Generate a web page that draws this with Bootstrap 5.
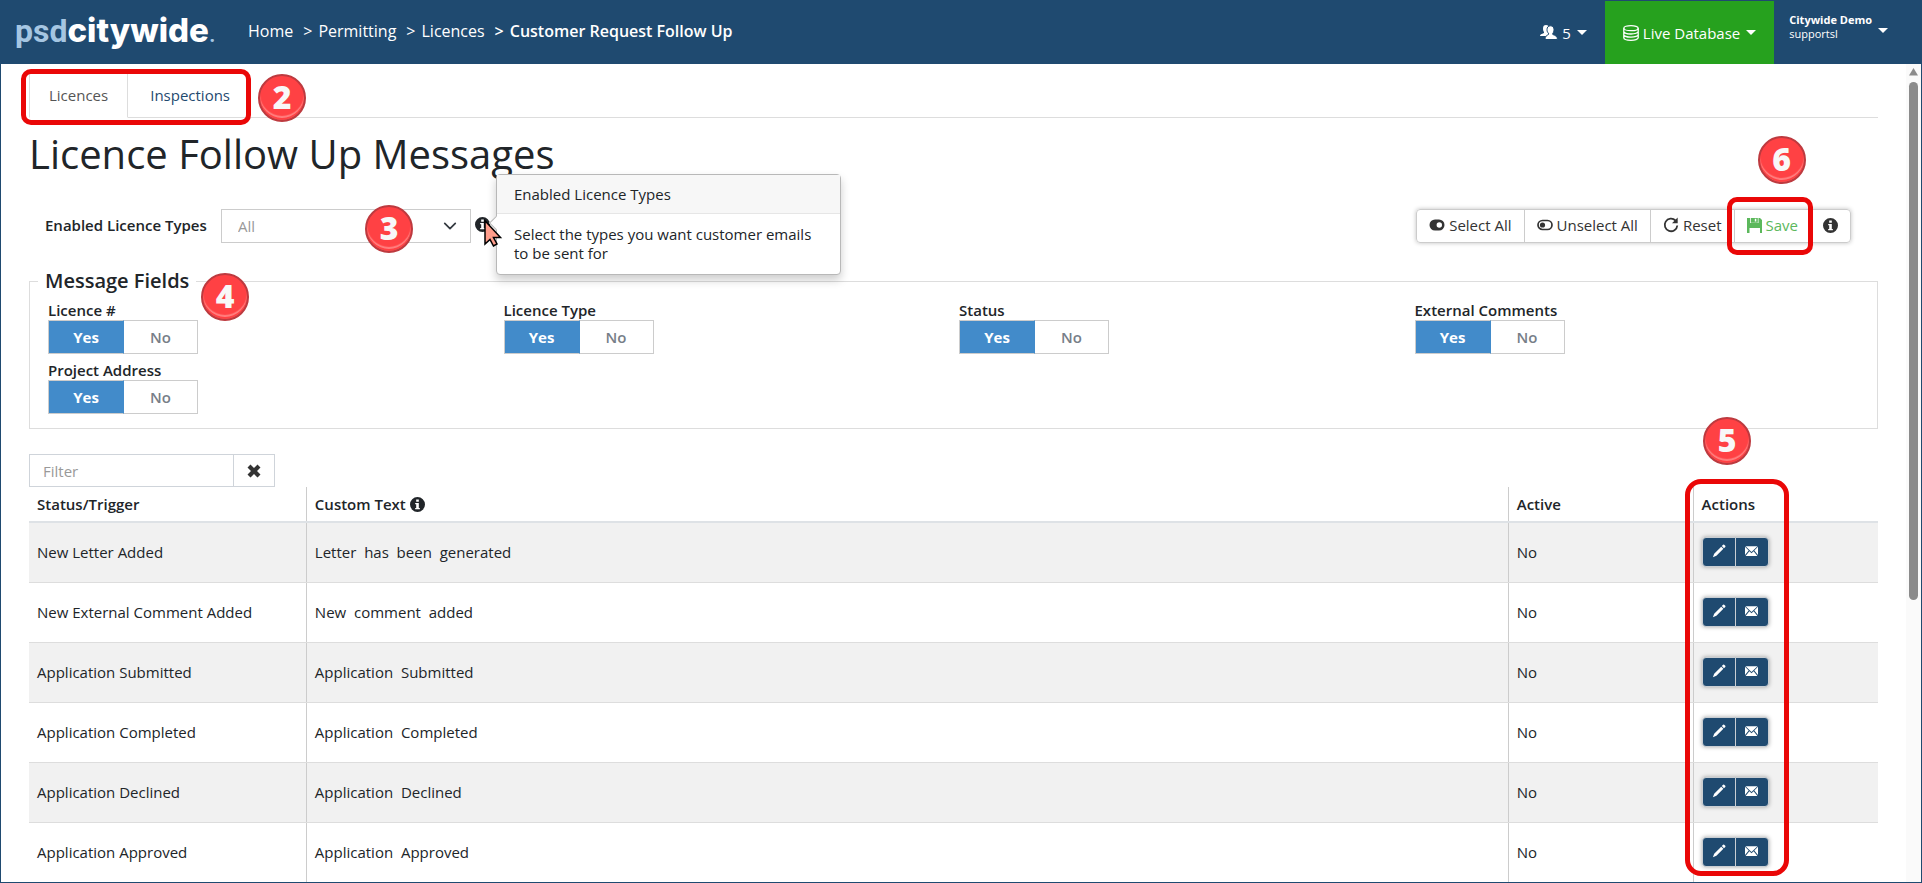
<!DOCTYPE html>
<html lang="en">
<head>
<meta charset="utf-8">
<meta name="viewport" content="width=device-width, initial-scale=1">
<title>Licence Follow Up Messages</title>
<link href="https://cdn.jsdelivr.net/npm/bootstrap@5.3.0/dist/css/bootstrap.min.css" rel="stylesheet">
<style>
  :root { --navy: #1f4a70; --line: #ddd; --edge: #ccc; --marker: #ea0707; }
  body { font-family: "Open Sans", sans-serif; font-size: 15px; line-height: 19px; color: #212529; border: 1px solid var(--navy); }
  svg { display: block; fill: currentColor; }
  svg.line-art { fill: none; stroke: currentColor; }

  .topbar { background: var(--navy); min-height: 63px; color: #fff; font-size: 16px; line-height: 22px; }
  .topbar a, .topbar button { color: #fff; text-decoration: none; }
  .brand { width: 200px; line-height: 40px; margin-left: 14px; margin-right: 33px; padding-bottom: 2px; }
  .brand-psd { font: 700 32px/40px Roboto, sans-serif; color: #a5c6e2; }
  .brand-city { font: 800 33px/40px Inter, sans-serif; }
  .brand-dot { font: 500 24px/40px Roboto, sans-serif; color: #a5c6e2; }
  .crumbs { --bs-breadcrumb-divider: ">"; --bs-breadcrumb-divider-color: #fff; --bs-breadcrumb-item-active-color: #fff; --bs-breadcrumb-item-padding-x: 6px; padding-bottom: 3px; }
  .crumbs .breadcrumb-item + .breadcrumb-item { padding-left: 10px; }
  .crumbs .breadcrumb-item.active { font-weight: 600; }
  .topbar .menu-btn { background: none; border: 0; padding: 0 18px; gap: 4px; font-size: 15px; }
  .topbar .live-db { background: #26a11e; }
  .topbar .account { font-size: 11px; line-height: 14px; text-align: left; padding: 0 33px 12px 15px; }
  .topbar .account .tri { margin-top: 8px; }
  .tri { width: 0; border: 5px solid transparent; border-top-color: #fff; border-bottom: 0; margin-left: 2px; }

  .content { padding: 8px 28px 0; overflow: hidden; }
  .scroll-track { width: 15px; background: #fafafa; padding: 4px 3px; color: #8b8b8b; }
  .scroll-thumb { width: 9px; height: 64%; border-radius: 5px; background: #8b8b8b; margin-top: 6px; }

  .page-tabs { --bs-nav-tabs-border-color: #ddd; --bs-nav-tabs-border-radius: 0; }
  .page-tabs .nav-link { padding: 12px 19px; line-height: 20px; color: var(--navy); }
  .page-tabs .nav-item + .nav-item { margin-left: 2px; }
  .page-tabs .nav-link.active { color: #555; border-color: #ddd #ddd #fff; }
  .page-title { font-size: 40px; line-height: 48px; font-weight: 400; margin: 12px 0 31px 0; }

  .types-label { font-weight: 600; width: 176px; padding-bottom: 2px; }
  .types-select { width: 250px; height: 34px; padding: 6px 16px; border-radius: 0; border: 1px solid var(--edge); font-size: 15px; line-height: 20px; color: #999; background-size: 18px 14px; background-position: right 11px center; }
  .help-pop { left: 275px; bottom: -32px; width: 345px; font-size: 15px; border: 1px solid #b8b8b8; border-radius: 4px; box-shadow: 0 5px 10px rgba(0,0,0,.2); background: #fff; z-index: 3; }
  .help-pop::before { content: ""; position: absolute; left: -6px; top: 43px; width: 10px; height: 10px; background: #fff; border: solid #b8b8b8; border-width: 0 0 1px 1px; transform: rotate(45deg); }
  .help-pop .popover-header { font-size: 15px; line-height: 19px; font-weight: 400; padding: 10px 17px 9px; background: #f7f7f7; border-bottom: 1px solid #e6e6e6; }
  .help-pop .popover-body { font-size: 15px; line-height: 19px; padding: 11px 17px; color: #212529; }
  .pointer { left: 262px; top: 10px; z-index: 4; }

  .tools { box-shadow: 0 0 4px rgba(0,0,0,.25); border-radius: 4px; margin-right: 27px; }
  .tools .btn { --bs-btn-border-color: #ccc; --bs-btn-bg: #fff; --bs-btn-color: #333; font-size: 15px; line-height: 20px; padding: 5px 12px 7px; border-radius: 4px; display: flex; align-items: center; gap: 4px; }
  .tools .btn-save { --bs-btn-color: #5cb85c; }

  .fields { border: 1px solid var(--line); margin-top: 26px; padding: 8px 13px 14px 12px; }
  .fields legend { float: none; width: auto; font-size: 20px; line-height: 24px; font-weight: 600; margin: 0 0 0 -4px; padding: 0 7px; }
  .fields .row { --bs-gutter-x: 12px; --bs-gutter-y: 7px; margin-left: 0; margin-right: 0; }
  .field-name { font-weight: 600; line-height: 19px; }
  .switcher .btn { height: 34px; padding: 6px 0 5px; font-size: 15px; line-height: 21px; font-weight: 600; border-radius: 0; border-color: var(--edge); color: #777e88; background: #fff; }
  .switcher .btn-on { width: 76px; }
  .switcher .btn-off { width: 75px; }
  .switcher .btn-check:checked + .btn { background: #428bca; color: #fff; font-weight: 700; border-color: #ccc; border-right-color: #428bca; }

  .filter { width: 246px; margin-top: 25px; }
  .filter .form-control, .filter .btn { height: 33px; border-radius: 0; border: 1px solid #cfd4da; font-size: 15px; line-height: 20px; }
  .filter .form-control { padding: 6px 13px 5px; }
  .filter .form-control::placeholder { color: #999; }
  .filter .btn { padding: 0 13px; color: #333; }

  .triggers { table-layout: fixed; margin: 0; --bs-table-striped-bg: #f1f1f1; --bs-table-color: #212529; }
  .triggers > :not(caption) > * > * { padding: 0 8px; border-bottom: 1px solid var(--line); vertical-align: middle; }
  .triggers thead th { height: 35px; font-weight: 600; border-bottom: 2px solid #dee2e6; }
  .triggers tbody td { height: 60px; }
  .triggers th + th, .triggers td + td { border-left: 1px solid var(--edge); }
  .col-status { width: 15%; } .col-narrow { width: 10%; }
  .row-tools { box-shadow: 0 0 4px rgba(0,0,0,.35); border-radius: 4px; }
  .row-tools .btn { height: 30px; width: 34px; padding: 0 0 3px; background: var(--navy); border-color: #c9ced3; color: #fff; border-radius: 4px; display: flex; align-items: center; justify-content: center; }

  /* numbered callouts over the page */
  .callout { position: absolute; width: 48px; height: 48px; border-radius: 50%; background: #ff4144; border: 2px solid #bd3a3f; box-shadow: inset 0 -2px 0 #ff4144, inset 0 -4px 1px #ff8080; color: #f8f8f8; font: 800 32px/42px "Open Sans", sans-serif; text-align: center; z-index: 6; }
  .frame { position: absolute; border: 5px solid var(--marker); border-radius: 10px; pointer-events: none; z-index: 5; }
  .frame-tabs { left: -8px; right: -1px; top: -3px; bottom: -8px; }
  .frame-save { left: -7px; right: -2px; top: -12px; bottom: -12px; }
  .frame-actions { right: 89px; top: -8px; bottom: 7px; width: 104px; border-radius: 16px; }
  .callout-2 { left: 100%; top: 2px; margin-left: 8px; }
  .callout-3 { left: 144px; top: -4px; }
  .callout-4 { left: 171px; top: -20px; }
  .callout-5 { right: 127px; top: -70px; }
  .callout-6 { left: 24px; top: -73px; }
</style>
</head>
<body class="vh-100 overflow-hidden d-flex flex-column">
<svg class="d-none" xmlns="http://www.w3.org/2000/svg">
  <symbol id="i-info" viewBox="0 0 16 16"><path fill-rule="evenodd" d="M8 0a8 8 0 1 1 0 16A8 8 0 0 1 8 0zM6.600 2.600v2.400h2.800V2.600zM5.500 6.300v1.400h1.100v4H5.500V13h5v-1.300H9.400V6.300z"/></symbol>
  <symbol id="i-pencil" viewBox="0 0 16 16"><path d="M12.700.8a1 1 0 0 1 1.200 0l1.300 1.300a1 1 0 0 1 0 1.200l-1.500 1.500-2.500-2.500zM10.500 3l2.500 2.500-8 8L1 15l1.500-4z"/></symbol>
  <symbol id="i-mail" viewBox="0 0 16 12"><path d="M.6 0h14.800L8 7.200zM0 .9 4.600 5.500 0 10.800zM16 .9v9.900l-4.600-5.300zM.7 12l4.700-5.700L8 8.800l2.600-2.500L15.300 12z"/></symbol>
</svg>

<header class="topbar d-flex align-items-stretch flex-shrink-0">
  <a href="#" class="brand d-flex align-items-baseline align-self-center" aria-label="psdcitywide"><span class="brand-psd">psd</span><span class="brand-city">citywide</span><span class="brand-dot">.</span></a>
  <nav aria-label="breadcrumb" class="align-self-center">
    <ol class="breadcrumb crumbs mb-0">
      <li class="breadcrumb-item"><a href="#">Home</a></li>
      <li class="breadcrumb-item"><a href="#">Permitting</a></li>
      <li class="breadcrumb-item"><a href="#">Licences</a></li>
      <li class="breadcrumb-item active" aria-current="page">Customer Request Follow Up</li>
    </ol>
  </nav>
  <div class="d-flex ms-auto">
    <button type="button" class="menu-btn d-flex align-items-center">
      <svg width="18" height="15" viewBox="0 0 18 15"><path d="M6 0c2 0 3 1 3 3.500C9 5.500 8.600 6.500 8 7v1.500L10 10v1H0c0-1.500 1.500-2 4-3V7c-.7-.7-1-2-1-3.500C3 1 4 0 6 0z"/><path stroke="#1f4a70" d="M10.500.8c2.300 0 3.500 1.400 3.500 3.900 0 1.900-.6 3-1.200 3.500v1.300c2.500 1 4.500 1.400 4.700 5H5c.2-3.400 1.600-4 3.500-5V8.200C7.700 7.500 7 6.500 7 4.700 7 2.200 8.200.8 10.500.8z"/></svg>
      5 <span class="tri"></span>
    </button>
    <button type="button" class="menu-btn live-db d-flex align-items-center">
      <svg class="line-art" width="16" height="16" viewBox="0 0 16 16" stroke-width="1.300"><ellipse cx="8" cy="3.200" rx="7.200" ry="2.500"/><path d="M.8 3.200v9.600c0 1.400 3.200 2.500 7.200 2.500s7.200-1.100 7.200-2.500V3.200M.8 6.500C.8 7.800 4 9 8 9s7.200-1.200 7.200-2.500M.8 9.700c0 1.300 3.200 2.500 7.200 2.500s7.200-1.200 7.200-2.500"/></svg>
      Live Database <span class="tri"></span>
    </button>
    <button type="button" class="menu-btn account d-flex align-items-center">
      <span><span class="d-block fw-bold">Citywide Demo</span>supportsl</span> <span class="tri"></span>
    </button>
  </div>
</header>

<div class="d-flex flex-grow-1 overflow-hidden">
<main class="content flex-grow-1">
  <div class="page-tabs nav nav-tabs">
    <div class="position-relative d-flex">
      <div class="nav-item"><a class="nav-link active" aria-current="page" href="#">Licences</a></div>
      <div class="nav-item"><a class="nav-link" href="#">Inspections</a></div>
      <span class="frame frame-tabs"></span>
      <span class="callout callout-2">2</span>
    </div>
  </div>

  <h1 class="page-title">Licence Follow Up Messages</h1>

  <div class="d-flex justify-content-between">
    <div class="d-flex ps-3">
      <label for="types" class="types-label align-self-center">Enabled Licence Types</label>
      <div class="position-relative d-flex">
        <select id="types" class="form-select types-select"><option>All</option></select>
        <svg class="ms-1 mt-2" width="15" height="15"><use href="#i-info"/></svg>
        <span class="callout callout-3">3</span>
        <div class="help-pop position-absolute" role="tooltip">
          <div class="popover-header">Enabled Licence Types</div>
          <div class="popover-body">Select the types you want customer emails to be sent for</div>
        </div>
        <svg class="pointer position-absolute" width="20" height="28" viewBox="0 0 20 28"><path d="M2 1.800V25l5-4.500L10.500 27l3.500-2-3.500-6.500h7z" fill="#ff9d8b" stroke="#000" stroke-width="1.500"/></svg>
      </div>
    </div>
    <div class="btn-group tools">
      <button type="button" class="btn"><svg width="16" height="12" viewBox="0 0 16 12"><path fill-rule="evenodd" d="M6 .5h4a5.500 5.500 0 0 1 0 11H6A5.500 5.500 0 0 1 6 .5zm4.300 2.800a2.700 2.700 0 1 0 0 5.400 2.700 2.700 0 0 0 0-5.400z"/></svg>Select All</button>
      <button type="button" class="btn"><svg width="16" height="12" viewBox="0 0 16 12"><rect x="1" y="1.500" width="14" height="9" rx="4.500" fill="none" stroke="currentColor" stroke-width="1.700"/><circle cx="5.500" cy="6" r="2.600"/></svg>Unselect All</button>
      <button type="button" class="btn"><svg width="16" height="16" viewBox="0 0 16 16"><path d="M12.500 3.500A6.300 6.300 0 1 0 14.300 8.500" fill="none" stroke="currentColor" stroke-width="1.800"/><path d="M14.700.5v5.700H9z"/></svg>Reset</button>
      <div class="btn-group position-relative">
        <button type="button" class="btn btn-save"><svg width="15" height="15" viewBox="0 0 15 15"><path fill-rule="evenodd" d="M0 0h3v5.500h8.500V0H13l2 2v13h-2V9.500H2.500V15H0zM3.800 0h7v4.800h-7zM7.800.8v2.700h1.500V.8zM3 5h9v4.600H3z" clip-rule="evenodd"/><path d="M2 5h11v5H2z"/></svg>Save</button>
        <span class="frame frame-save"></span>
        <span class="callout callout-6">6</span>
      </div>
      <button type="button" class="btn" aria-label="Help"><svg width="15" height="15"><use href="#i-info"/></svg></button>
    </div>
  </div>

  <fieldset class="fields position-relative">
    <legend>Message Fields</legend>
    <span class="callout callout-4">4</span>
    <div class="row row-cols-4">
      <div class="col"><div class="field-name" id="f1">Licence #</div>
        <div class="btn-group switcher" role="group" aria-labelledby="f1"><input type="radio" class="btn-check" name="f1" id="f1y" checked><label class="btn btn-on" for="f1y">Yes</label><input type="radio" class="btn-check" name="f1" id="f1n"><label class="btn btn-off" for="f1n">No</label></div></div>
      <div class="col"><div class="field-name" id="f2">Licence Type</div>
        <div class="btn-group switcher" role="group" aria-labelledby="f2"><input type="radio" class="btn-check" name="f2" id="f2y" checked><label class="btn btn-on" for="f2y">Yes</label><input type="radio" class="btn-check" name="f2" id="f2n"><label class="btn btn-off" for="f2n">No</label></div></div>
      <div class="col"><div class="field-name" id="f3">Status</div>
        <div class="btn-group switcher" role="group" aria-labelledby="f3"><input type="radio" class="btn-check" name="f3" id="f3y" checked><label class="btn btn-on" for="f3y">Yes</label><input type="radio" class="btn-check" name="f3" id="f3n"><label class="btn btn-off" for="f3n">No</label></div></div>
      <div class="col"><div class="field-name" id="f4">External Comments</div>
        <div class="btn-group switcher" role="group" aria-labelledby="f4"><input type="radio" class="btn-check" name="f4" id="f4y" checked><label class="btn btn-on" for="f4y">Yes</label><input type="radio" class="btn-check" name="f4" id="f4n"><label class="btn btn-off" for="f4n">No</label></div></div>
      <div class="col"><div class="field-name" id="f5">Project Address</div>
        <div class="btn-group switcher" role="group" aria-labelledby="f5"><input type="radio" class="btn-check" name="f5" id="f5y" checked><label class="btn btn-on" for="f5y">Yes</label><input type="radio" class="btn-check" name="f5" id="f5n"><label class="btn btn-off" for="f5n">No</label></div></div>
    </div>
  </fieldset>

  <div class="input-group filter">
    <input type="text" class="form-control" placeholder="Filter" aria-label="Filter">
    <button type="button" class="btn" aria-label="Clear filter"><svg width="14" height="14" viewBox="0 0 14 14"><path d="M3.500.5 7 4 10.500.5l3 3L10 7l3.500 3.500-3 3L7 10l-3.500 3.500-3-3L4 7 .5 3.500z"/></svg></button>
  </div>

  <div class="position-relative">
    <table class="table table-striped triggers">
      <thead>
        <tr><th class="col-status">Status/Trigger</th><th><span class="d-flex align-items-center gap-1">Custom Text <svg width="15" height="15"><use href="#i-info"/></svg></span></th><th class="col-narrow">Active</th><th class="col-narrow">Actions</th></tr>
      </thead>
      <tbody>
        <tr><td>New Letter Added</td><td>Letter&nbsp; has&nbsp; been&nbsp; generated</td><td>No</td><td><div class="btn-group row-tools"><button type="button" class="btn" aria-label="Edit"><svg width="14" height="14"><use href="#i-pencil"/></svg></button><button type="button" class="btn" aria-label="Email"><svg width="13" height="10"><use href="#i-mail"/></svg></button></div></td></tr>
        <tr><td>New External Comment Added</td><td>New&nbsp; comment&nbsp; added</td><td>No</td><td><div class="btn-group row-tools"><button type="button" class="btn" aria-label="Edit"><svg width="14" height="14"><use href="#i-pencil"/></svg></button><button type="button" class="btn" aria-label="Email"><svg width="13" height="10"><use href="#i-mail"/></svg></button></div></td></tr>
        <tr><td>Application Submitted</td><td>Application&nbsp; Submitted</td><td>No</td><td><div class="btn-group row-tools"><button type="button" class="btn" aria-label="Edit"><svg width="14" height="14"><use href="#i-pencil"/></svg></button><button type="button" class="btn" aria-label="Email"><svg width="13" height="10"><use href="#i-mail"/></svg></button></div></td></tr>
        <tr><td>Application Completed</td><td>Application&nbsp; Completed</td><td>No</td><td><div class="btn-group row-tools"><button type="button" class="btn" aria-label="Edit"><svg width="14" height="14"><use href="#i-pencil"/></svg></button><button type="button" class="btn" aria-label="Email"><svg width="13" height="10"><use href="#i-mail"/></svg></button></div></td></tr>
        <tr><td>Application Declined</td><td>Application&nbsp; Declined</td><td>No</td><td><div class="btn-group row-tools"><button type="button" class="btn" aria-label="Edit"><svg width="14" height="14"><use href="#i-pencil"/></svg></button><button type="button" class="btn" aria-label="Email"><svg width="13" height="10"><use href="#i-mail"/></svg></button></div></td></tr>
        <tr><td>Application Approved</td><td>Application&nbsp; Approved</td><td>No</td><td><div class="btn-group row-tools"><button type="button" class="btn" aria-label="Edit"><svg width="14" height="14"><use href="#i-pencil"/></svg></button><button type="button" class="btn" aria-label="Email"><svg width="13" height="10"><use href="#i-mail"/></svg></button></div></td></tr>
      </tbody>
    </table>
    <span class="frame frame-actions"></span>
    <span class="callout callout-5">5</span>
  </div>
</main>
<div class="scroll-track flex-shrink-0">
  <svg width="9" height="8" viewBox="0 0 9 8"><path d="M4.500 0 9 7.500H0z"/></svg>
  <div class="scroll-thumb"></div>
</div>
</div>
<script src="https://cdn.jsdelivr.net/npm/bootstrap@5.3.0/dist/js/bootstrap.bundle.min.js"></script>
</body>
</html>
